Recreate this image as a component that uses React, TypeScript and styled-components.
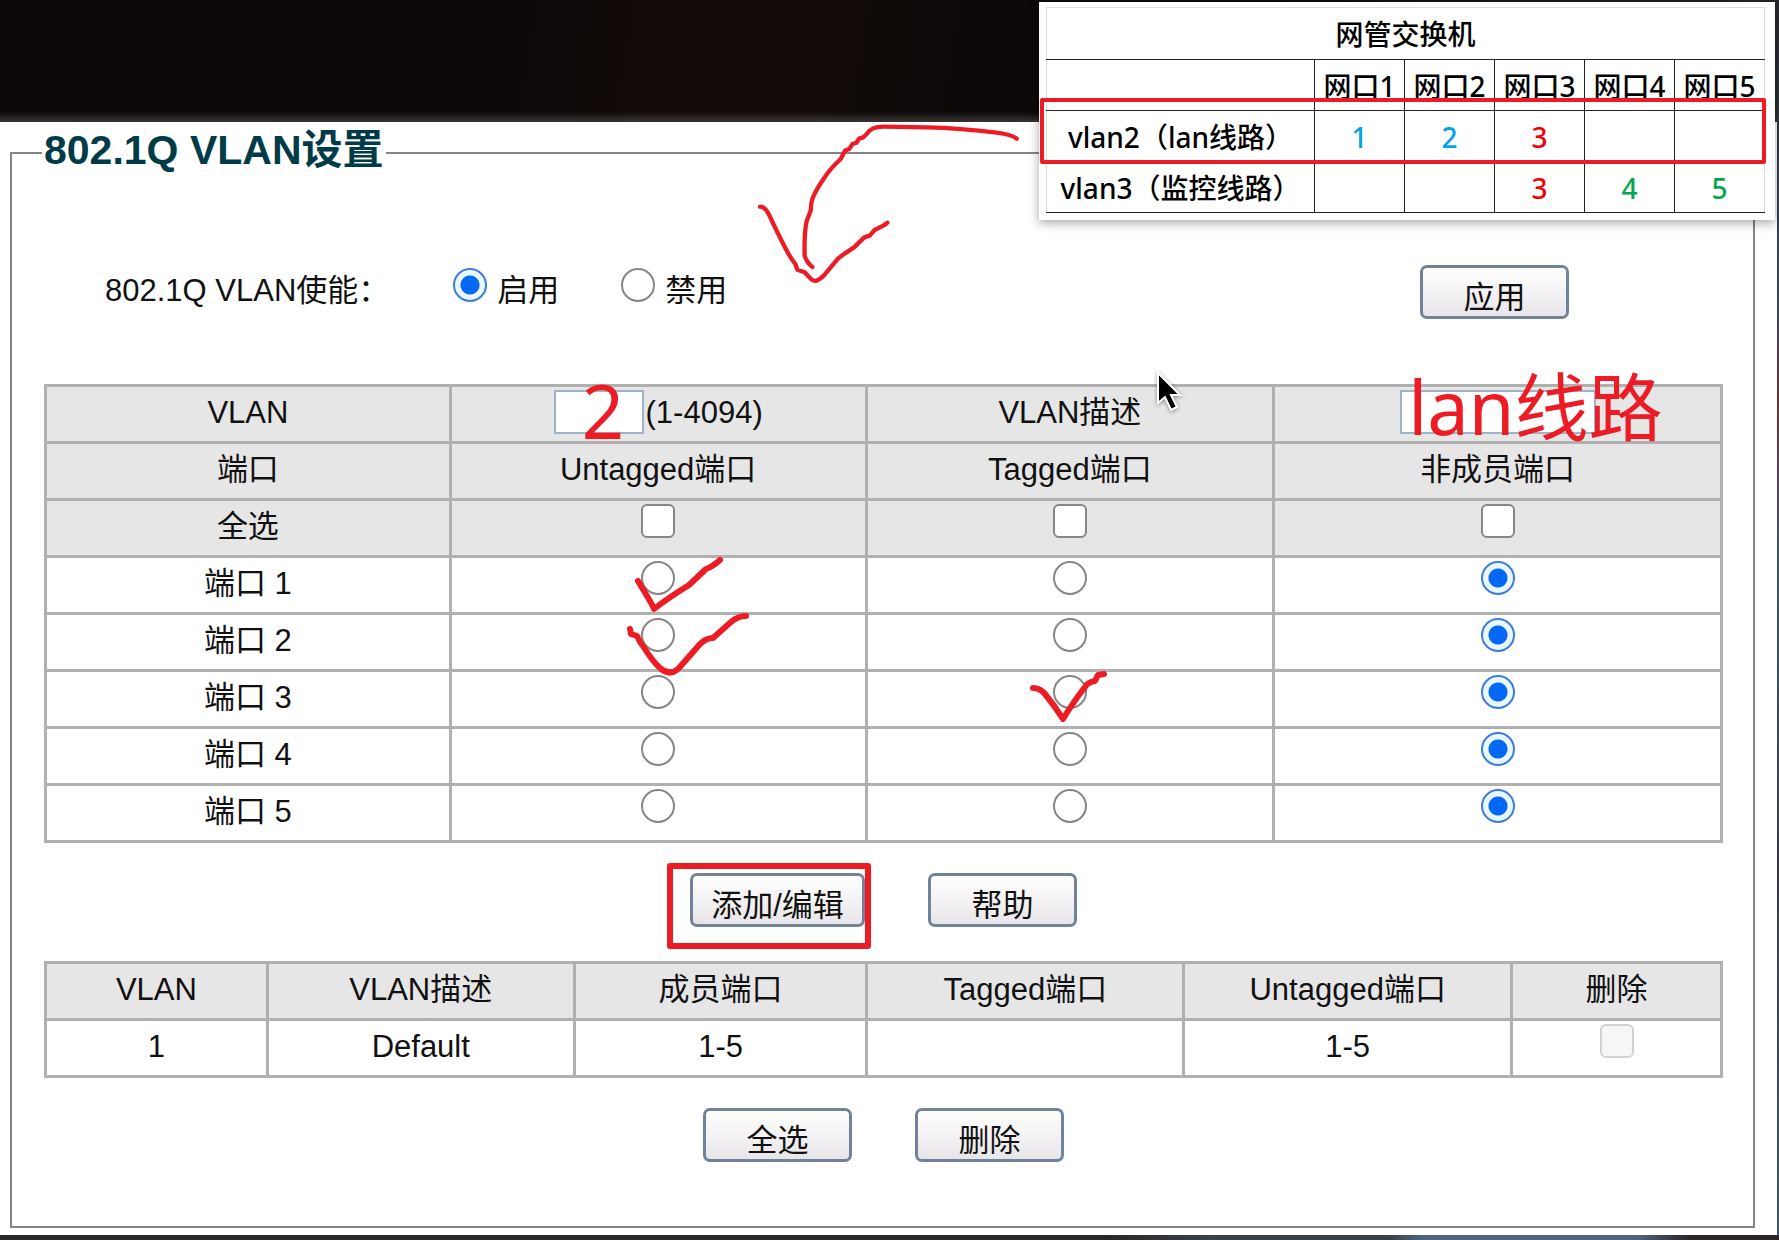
import React from "react";
import styled, { createGlobalStyle, css } from "styled-components";

const sans = `"Liberation Sans", "Noto Sans CJK SC", sans-serif`;
const note = `"Noto Sans", "Noto Sans CJK SC", sans-serif`;
const red = "#ed1c24";

const GlobalStyle = createGlobalStyle`
  *, *::before, *::after { box-sizing: border-box; }
  body { margin: 0; background: #0d0909; color: #111; font-family: ${sans}; font-size: 31px; line-height: 40px; }
`;

const Page = styled.div`
  position: relative;
  min-height: 100vh;
  padding: 122px 2px 5px 0;
  background:
    linear-gradient(90deg, #2b2627 0 62%, #39414b 68% 78%, #4d647b 80% 92%, #2c2527 95%) bottom / 100% 5px no-repeat,
    linear-gradient(#2b2b30, #3b4656 25%, #6a3038 32%, #42566b 45%, #3a3a40 70%, #45566f) right / 2px 100% no-repeat,
    linear-gradient(transparent 112px, #393434 122px),
    linear-gradient(100deg, #0d0909 0, #0d0909 25%, #140b09 38%, #0c0908 50%, #0c0908 62%, #333 100%);
`;

const Panel = styled.main`
  background: #fff;
  padding: 5px 22px 7px 10px;
`;

const Group = styled.fieldset`
  margin: 0;
  min-width: 0;
  padding: 0 30px 30px 32px;
  border: 2px solid #858585;
`;

const Title = styled.legend`
  margin-left: -2px;
  padding: 0 2px 6px;
  color: #003c48;
  font-size: 41px;
  font-weight: bold;
  line-height: 46px;
`;

const EnableRow = styled.div`
  display: flex;
  align-items: flex-start;
  padding: 86px 154px 0 61px;
  height: 205px;
`;

const EnableCaption = styled.span`
  margin: 6px 64px 0 0;
`;

const Choice = styled.label`
  display: flex;
  align-items: flex-start;
  gap: 10px;
  margin-right: 62px;
  padding-top: 3px;
  span { margin-top: 3px; }
`;

const box = css<{ disabled?: boolean }>`
  appearance: none;
  display: block;
  flex: none;
  width: 34px;
  height: 34px;
  margin: 0 auto;
  border: 2px solid ${(p) => (p.disabled ? "#d2d2d2" : "#868686")};
  background: ${(p) => (p.disabled ? "#f7f7f7" : "#fff")};
`;

const Tick = styled.input.attrs({ type: "checkbox" })`
  ${box}
  border-radius: 6px;
`;

const Radio = styled.input.attrs({ type: "radio" })`
  ${box}
  border-radius: 50%;
  &:checked {
    border-color: #3f7ddb;
    background: radial-gradient(circle, #0568f5 0 9px, #e9f8ff 10px);
  }
`;

const Button = styled.button<{ $wide?: boolean }>`
  display: block;
  width: ${(p) => (p.$wide ? 175 : 149)}px;
  height: 54px;
  padding: 11px 0 0;
  border: 3px solid #70839a;
  border-radius: 7px;
  background: linear-gradient(#fff, #f4f2f4 50%, #e6e5e8);
  color: #111;
  font: inherit;
  line-height: 37px;
`;

const ApplyButton = styled(Button)`
  margin-left: auto;
`;

const Grid = styled.table`
  width: 100%;
  table-layout: fixed;
  border-collapse: collapse;
  text-align: center;
`;

const cell = css`
  position: relative;
  height: 57px;
  padding: 3px 0 0;
  border: 3px solid #b0b0b0;
  font-weight: normal;
  vertical-align: top;
`;

const Head = styled.th`
  ${cell}
  background: #e7e6e7;
`;

const Cell = styled.td`
  ${cell}
`;

const Text = styled.div`
  margin-top: 3px;
`;

const Field = styled.div`
  display: flex;
  justify-content: center;
  gap: 2px;
  label { margin-top: 3px; }
`;

const TextBox = styled.input<{ $width: number }>`
  width: ${(p) => p.$width}px;
  height: 44px;
  padding: 0 6px;
  border: 2px solid #9fb2c8;
  background: #fff;
  font: inherit;
`;

const Actions = styled.div`
  display: flex;
  justify-content: center;
  gap: 63px;
  padding: 30px 0 34px;
`;

const Marked = styled.div`
  position: relative;
  &::after {
    content: "";
    position: absolute;
    inset: -10px -6px -22px -23px;
    border: 6px solid ${red};
    border-radius: 3px;
    pointer-events: none;
  }
`;

const BigNote = styled.span<{ $left: number; $top: number }>`
  position: absolute;
  z-index: 2;
  top: ${(p) => p.$top}px;
  left: ${(p) => p.$left}px;
  color: ${red};
  font: 74px/100px ${note};
  white-space: nowrap;
  pointer-events: none;
`;

const Stroke = styled.svg`
  fill: none;
  stroke: ${red};
  stroke-width: 6;
  stroke-linecap: round;
  stroke-linejoin: round;
  pointer-events: none;
`;

const CheckMark = styled(Stroke)`
  position: absolute;
  z-index: 2;
  top: -10px;
  left: 50%;
  width: 160px;
  height: 80px;
  margin-left: -40px;
`;

const Arrow = styled(Stroke)`
  position: absolute;
  top: 120px;
  left: 750px;
  width: 280px;
  height: 170px;
  stroke-width: 13;
`;

const Pointer = styled.svg`
  position: absolute;
  top: 368px;
  left: 1154px;
  width: 32px;
  height: 48px;
  filter: drop-shadow(0 1px 2px rgba(0, 0, 0, 0.4));
`;

const Inset = styled.aside`
  position: absolute;
  top: 2px;
  right: 4px;
  width: 736px;
  padding: 5px 10px 7px 7px;
  background: #fff;
  box-shadow: 0 3px 10px rgba(0, 0, 0, 0.35);
  &::after {
    content: "";
    position: absolute;
    top: 96px;
    left: 1px;
    right: 9px;
    height: 66px;
    border: 4px solid ${red};
    border-radius: 2px;
  }
`;

const PlanTable = styled.table`
  width: 100%;
  table-layout: fixed;
  border-collapse: collapse;
  border: 1px solid #ddd;
  color: #000;
  font-family: ${note};
  font-size: 28px;
  font-weight: 500;
  text-align: center;
`;

const PlanCell = styled.td<{ $color?: string }>`
  height: 51px;
  padding: 2px 0 0;
  border: 1px solid #222;
  color: ${(p) => p.$color ?? "#000"};
  white-space: nowrap;
  &:first-child { border-left-color: #ddd; }
  &:last-child { border-right-color: #ddd; }
`;

const PlanTitle = styled.th`
  height: 52px;
  padding: 0;
  border-bottom: 1px solid #222;
  font-weight: 500;
`;

const blue = "#00a2e8";
const green = "#00a650";
const pure = "#f00000";

const plan = [
  { name: "", ports: ["网口1", "网口2", "网口3", "网口4", "网口5"], colors: [] as string[] },
  { name: "vlan2（lan线路）", ports: ["1", "2", "3", "", ""], colors: [blue, blue, pure] },
  { name: "vlan3（监控线路）", ports: ["", "", "3", "4", "5"], colors: ["", "", pure, green, green] },
];

const checks: Record<string, string> = {
  "1-0": "M-20 23L-11 38Q-6 46-4 51Q10 40 31 27L48 11Q54 9 62 2",
  "2-0": "M-28 14L-27 19L-21 21Q-17 29-15 31Q-5 47 2 53Q12 62 21 53L42 29Q48 23 55 23L73 7Q80 1 88 1",
  "3-1": "M-37 16Q-30 16-25 22Q-16 33-7 47Q4 29 15 15Q18 10 25 9L28 3L34 2",
};

const columns = ["untagged", "tagged", "none"];
const portWidths = [405, 416, 408, 448];
const members = [
  ["VLAN", 222], ["VLAN描述", 307], ["成员端口", 293], ["Tagged端口", 317], ["Untagged端口", 328], ["删除", 210],
] as const;

const Columns = ({ widths }: { widths: readonly number[] }) => {
  const total = widths.reduce((a, b) => a + b, 0);
  return (
    <colgroup>
      {widths.map((w, i) => <col key={i} style={{ width: `${(w / total) * 100}%` }} />)}
    </colgroup>
  );
};

export default function App() {
  return (
    <>
      <GlobalStyle />
      <Page>
        <Panel>
          <Group>
            <Title>802.1Q VLAN设置</Title>
            <EnableRow>
              <EnableCaption>802.1Q VLAN使能：</EnableCaption>
              <Choice><Radio name="enable" defaultChecked /><span>启用</span></Choice>
              <Choice><Radio name="enable" /><span>禁用</span></Choice>
              <ApplyButton type="button">应用</ApplyButton>
            </EnableRow>

            <Grid>
              <Columns widths={portWidths} />
              <thead>
                <tr>
                  <Head><Text>VLAN</Text></Head>
                  <Head>
                    <Field>
                      <TextBox id="vid" $width={90} />
                      <label htmlFor="vid">(1-4094)</label>
                    </Field>
                    <BigNote $left={130} $top={-26}>2</BigNote>
                  </Head>
                  <Head><Text><label htmlFor="desc">VLAN描述</label></Text></Head>
                  <Head>
                    <Field><TextBox id="desc" $width={196} /></Field>
                    <BigNote $left={133} $top={-30}>lan线路</BigNote>
                  </Head>
                </tr>
                <tr>
                  {["端口", "Untagged端口", "Tagged端口", "非成员端口"].map((t) => (
                    <Head key={t}><Text>{t}</Text></Head>
                  ))}
                </tr>
                <tr>
                  <Head><Text>全选</Text></Head>
                  {columns.map((c) => <Head key={c}><Tick aria-label={`全选 ${c}`} /></Head>)}
                </tr>
              </thead>
              <tbody>
                {[1, 2, 3, 4, 5].map((n) => (
                  <tr key={n}>
                    <Cell><Text>端口 {n}</Text></Cell>
                    {columns.map((c, i) => (
                      <Cell key={c}>
                        <Radio name={`port${n}`} aria-label={`端口 ${n} ${c}`} defaultChecked={i === 2} />
                        {checks[`${n}-${i}`] && (
                          <CheckMark viewBox="-40 -10 160 80"><path d={checks[`${n}-${i}`]} /></CheckMark>
                        )}
                      </Cell>
                    ))}
                  </tr>
                ))}
              </tbody>
            </Grid>

            <Actions>
              <Marked><Button type="button" $wide>添加/编辑</Button></Marked>
              <Button type="button">帮助</Button>
            </Actions>

            <Grid>
              <Columns widths={members.map(([, w]) => w)} />
              <thead>
                <tr>{members.map(([t]) => <Head key={t}><Text>{t}</Text></Head>)}</tr>
              </thead>
              <tbody>
                <tr>
                  {["1", "Default", "1-5", "", "1-5"].map((t, i) => (
                    <Cell key={i}><Text>{t}</Text></Cell>
                  ))}
                  <Cell><Tick disabled aria-label="删除" /></Cell>
                </tr>
              </tbody>
            </Grid>

            <Actions>
              <Button type="button">全选</Button>
              <Button type="button">删除</Button>
            </Actions>
          </Group>
        </Panel>

        <Arrow viewBox="450 90 840 510">
          <path d="M1250 146Q1236 134 1190 128Q1080 114 980 112L850 110Q814 110 800 132L790 142L777 146L770 158L757 162L748 177L736 181L722 207Q690 236 670 268Q636 318 634 340L632 362L620 393Q612 430 614 497Q618 514 637 531" />
          <path d="M480 350Q496 350 508 376Q536 436 556 474Q570 502 586 522L592 539L614 547L633 567Q648 582 672 556L712 508Q722 498 762 472L793 442L809 437L824 420L850 407L862 398" />
        </Arrow>

        <Pointer viewBox="0 0 32 48" aria-hidden="true">
          <path d="M4 5V35L11 29L17 42L23 39L17 27H26Z" fill="#000" stroke="#fff" strokeWidth="2" />
        </Pointer>

        <Inset>
          <PlanTable>
            <Columns widths={[268, 90, 90, 90, 90, 90]} />
            <thead>
              <tr><PlanTitle colSpan={6}>网管交换机</PlanTitle></tr>
            </thead>
            <tbody>
              {plan.map((row) => (
                <tr key={row.name}>
                  <PlanCell>{row.name}</PlanCell>
                  {row.ports.map((p, i) => (
                    <PlanCell key={i} $color={row.colors[i] || undefined}>{p}</PlanCell>
                  ))}
                </tr>
              ))}
            </tbody>
          </PlanTable>
        </Inset>
      </Page>
    </>
  );
}
